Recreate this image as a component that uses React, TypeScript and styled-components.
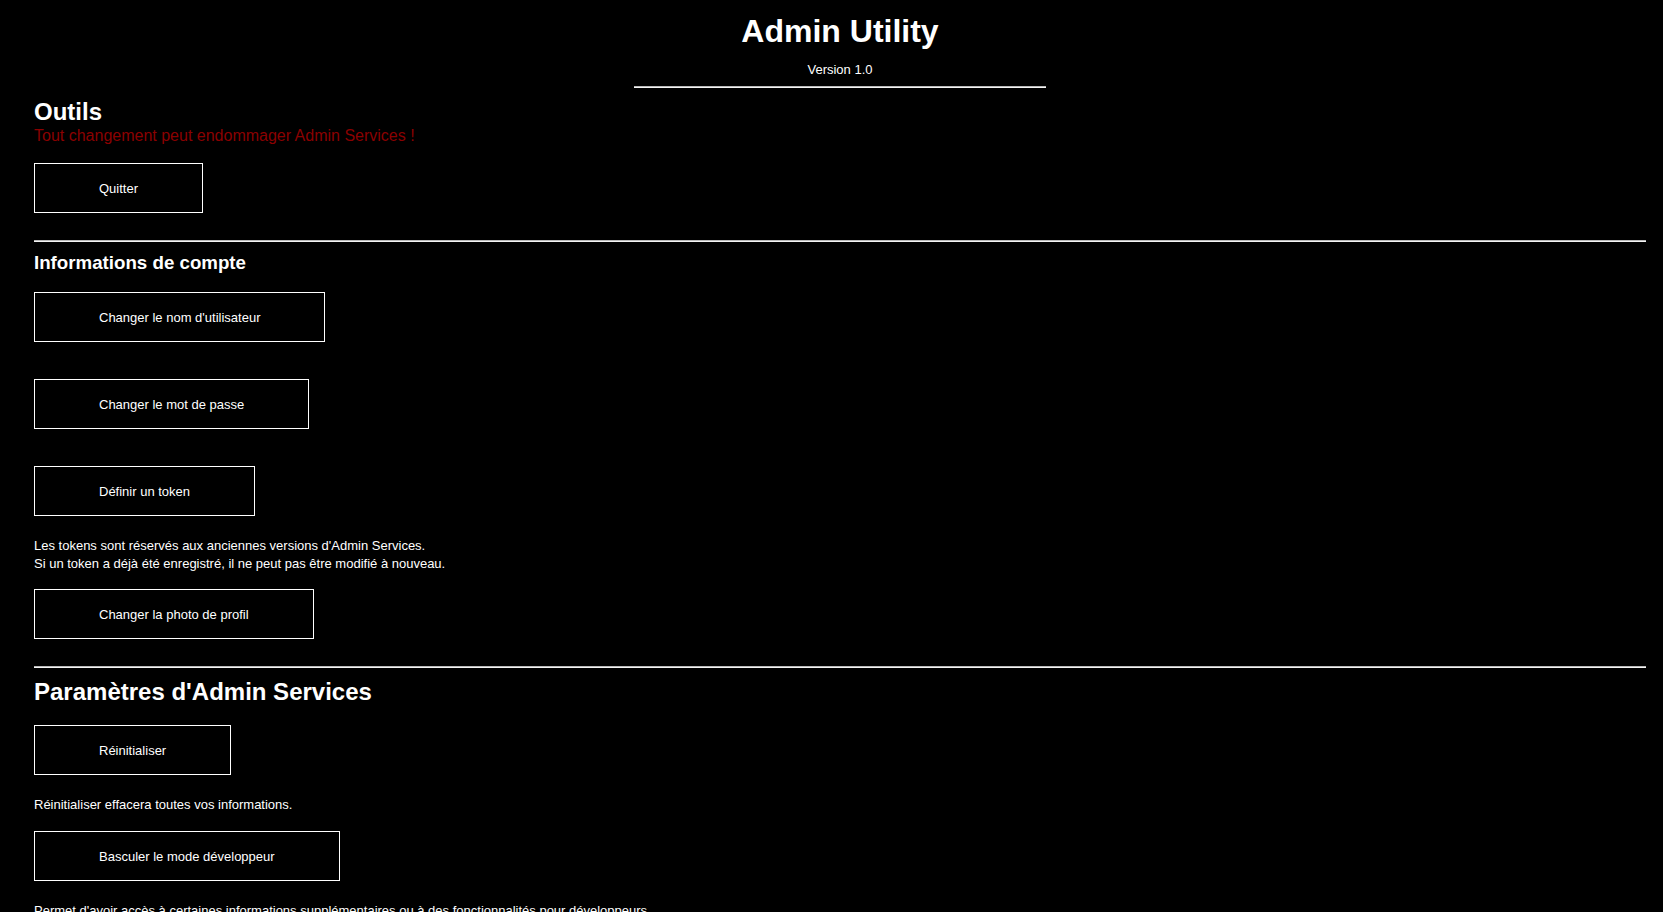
import React from "react";
import styled, { createGlobalStyle } from "styled-components";

const GlobalStyle = createGlobalStyle`
  html, body {
    margin: 0;
    padding: 0;
    background: #000;
  }
  body {
    font-family: "Liberation Sans", Arial, sans-serif;
    color: #fff;
  }
`;

const Page = styled.main`
  padding: 13px 17px 40px 34px;
  display: flex;
  flex-direction: column;
  align-items: stretch;
`;

const Header = styled.header`
  display: flex;
  flex-direction: column;
  align-items: center;
`;

const Title = styled.h1`
  margin: 0;
  font-size: 32px;
  line-height: 37px;
  font-weight: bold;
  color: #fff;
`;

const Version = styled.div`
  margin-top: 12px;
  font-size: 13px;
  line-height: 15px;
`;

const HeaderRule = styled.div`
  width: 412px;
  margin-top: 9px;
  border-top: 1px solid #b8b8b8;
  border-bottom: 1px solid #f4f4f4;
`;

const Divider = styled.div`
  margin-top: 27px;
  border-top: 1px solid #b8b8b8;
  border-bottom: 1px solid #f4f4f4;
`;

const Section = styled.section`
  display: flex;
  flex-direction: column;
  align-items: flex-start;
`;

const SectionTitle = styled.h2`
  margin: 10px 0 0;
  font-size: 24px;
  line-height: 28px;
  font-weight: bold;
  color: #fff;
`;

const SubTitle = styled.h3`
  margin: 10px 0 0;
  font-size: 18.72px;
  line-height: 22px;
  font-weight: bold;
  color: #fff;
`;

const Warning = styled.p`
  margin: 1px 0 0;
  font-size: 16px;
  line-height: 18px;
  color: #8b0000;
`;

const ActionButton = styled.button<{ $gap?: number }>`
  box-sizing: border-box;
  margin-top: ${(p) => p.$gap ?? 18}px;
  height: 50px;
  padding: 0 64px;
  background: #000;
  border: 1px solid #fff;
  color: #fff;
  font-family: "Liberation Sans", Arial, sans-serif;
  font-size: 13px;
  line-height: 15px;
  display: flex;
  align-items: center;
  cursor: pointer;
`;

const Note = styled.p<{ $gap?: number }>`
  margin: ${(p) => p.$gap ?? 20}px 0 0;
  font-size: 13px;
  line-height: 18px;
  color: #fff;
`;

export default function App() {
  return (
    <>
      <GlobalStyle />
      <Page>
        <Header>
          <Title>Admin Utility</Title>
          <Version>Version 1.0</Version>
          <HeaderRule />
        </Header>

        <Section>
          <SectionTitle>Outils</SectionTitle>
          <Warning>Tout changement peut endommager Admin Services !</Warning>
          <ActionButton>Quitter</ActionButton>
        </Section>

        <Divider />

        <Section>
          <SubTitle>Informations de compte</SubTitle>
          <ActionButton>Changer le nom d'utilisateur</ActionButton>
          <ActionButton $gap={37}>Changer le mot de passe</ActionButton>
          <ActionButton $gap={37}>Définir un token</ActionButton>
          <Note $gap={21}>
            Les tokens sont réservés aux anciennes versions d'Admin Services.
            <br />
            Si un token a déjà été enregistré, il ne peut pas être modifié à nouveau.
          </Note>
          <ActionButton $gap={16}>Changer la photo de profil</ActionButton>
        </Section>

        <Divider />

        <Section>
          <SectionTitle>Paramètres d'Admin Services</SectionTitle>
          <ActionButton $gap={19}>Réinitialiser</ActionButton>
          <Note $gap={21}>Réinitialiser effacera toutes vos informations.</Note>
          <ActionButton $gap={17}>Basculer le mode développeur</ActionButton>
          <Note $gap={21}>
            Permet d'avoir accès à certaines informations supplémentaires ou à des fonctionnalités pour développeurs.
          </Note>
        </Section>
      </Page>
    </>
  );
}
